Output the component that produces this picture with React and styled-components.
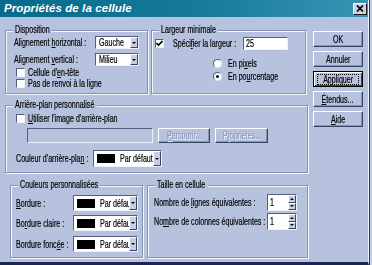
import React from 'react';
import styled, { createGlobalStyle, css } from 'styled-components';

const BG = '#b7c3de';
const DARK = '#3a4466';
const SHADE = '#8692b2';
const LIGHT = '#f4f7fc';
const FONT = '"Liberation Sans", Arial, sans-serif';

const Global = createGlobalStyle`
  html, body { margin: 0; padding: 0; background: #c6d0ea; }
  body { font-family: ${FONT}; font-size: 10px; line-height: 11px; color: #000; }
  * { box-sizing: border-box; }
`;

/* Text of the screenshot is horizontally condensed: scale glyphs only */
const Txt = styled.span`
  display: inline-block;
  white-space: nowrap;
  transform: scaleX(0.71);
  transform-origin: ${p => p.$origin || 'left'} center;
  -webkit-text-stroke: 0.2px currentColor;
`;

const Screen = styled.div`
  width: 372px;
  height: 265px;
  overflow: hidden;
  display: flex;
  background: #c6d0ea;
`;

const Window = styled.div`
  width: 369px;
  height: 265px;
  flex: none;
  background: ${BG};
  border-right: 1px solid #eef2fa;
  border-bottom: 3px solid #1b2654;
  box-shadow: 1px 0 0 #23338a;
  display: flex;
  flex-direction: column;
`;

const TitleBar = styled.div`
  height: 17px;
  flex: none;
  background: linear-gradient(to right, #066a8a 0%, #167b9b 55%, #3a94b4 100%);
  display: flex;
  align-items: center;
  justify-content: space-between;
  padding: 0 1px 0 4px;
`;

const Title = styled.span`
  font-family: "Liberation Sans", Arial, sans-serif;
  font-weight: bold;
  font-style: oblique 12deg;
  font-synthesis: style weight;
  font-size: 11.5px;
  letter-spacing: 0.1px;
  color: #fff;
`;

const CloseButton = styled.span`
  width: 14px;
  height: 12px;
  background: #c9d1e3;
  display: flex;
  align-items: center;
  justify-content: center;
  border: 1px solid;
  border-color: #fff #1a1a1a #1a1a1a #fff;
`;

const Body = styled.div`
  flex: 1;
  display: flex;
  padding: 8px 0 0 5px;
`;

const Main = styled.div`
  width: 303px;
  flex: none;
  display: flex;
  flex-direction: column;
`;

const Side = styled.div`
  width: 50px;
  margin-left: 5px;
  padding-top: 6px;
  display: flex;
  flex-direction: column;
  gap: 4px;
`;

const GroupRow = styled.div`
  display: flex;
  gap: ${p => p.$gap || 0}px;
  margin-top: ${p => p.$mt || 0}px;
  padding-left: ${p => p.$pl || 0}px;
`;

const Group = styled.fieldset`
  margin: 0 0 0 ${p => p.$ml || 0}px;
  padding: 0;
  min-width: 0;
  width: ${p => p.$w}px;
  height: ${p => p.$h}px;
  border: 1px solid ${SHADE};
  box-shadow: 1px 1px 0 ${LIGHT}, inset 1px 1px 0 ${LIGHT};
`;

const Legend = styled.legend`
  width: ${p => p.$w}px;
  margin-left: 7px;
  padding: 0 2px;
  line-height: 10px;
  background: ${BG};
  white-space: nowrap;
`;

const Content = styled.div`
  padding: ${p => p.$pad};
  display: flex;
  flex-direction: column;
`;

const FieldRow = styled.div`
  display: flex;
  align-items: center;
  height: ${p => p.$h}px;
  margin-top: ${p => p.$mt || 0}px;
  margin-left: ${p => p.$ml || 0}px;
  gap: ${p => p.$gap || 0}px;
  white-space: nowrap;
`;

const FieldLabel = styled.span`
  width: ${p => p.$w}px;
  flex: none;
  padding-left: ${p => p.$pl || 0}px;
  white-space: nowrap;
`;

const sunken = css`
  border: 1px solid;
  border-color: #56607e #eef2fa #eef2fa #56607e;
`;

const Combo = styled.div`
  ${sunken};
  width: ${p => p.$w}px;
  height: ${p => p.$h}px;
  flex: none;
  background: #fff;
  display: flex;
  align-items: stretch;
  overflow: hidden;
`;

const ComboText = styled.span`
  flex: 1;
  min-width: 0;
  overflow: hidden;
  white-space: nowrap;
  padding-left: ${p => (p.$pl === undefined ? 3 : p.$pl)}px;
  display: flex;
  align-items: center;
`;

const Swatch = styled.span`
  width: 18px;
  height: 9px;
  flex: none;
  background: #000;
  margin: 0 5px 0 3px;
`;

const ComboArrow = styled.span`
  width: 8px;
  flex: none;
  background: #c8cfe2;
  border: 1px solid;
  border-color: #fff ${DARK} ${DARK} #fff;
  display: flex;
  align-items: center;
  justify-content: center;
  &::after {
    content: '';
    border-left: 2px solid transparent;
    border-right: 2px solid transparent;
    border-top: 2px solid #000;
  }
`;

const TextField = styled.div`
  ${sunken};
  width: ${p => p.$w}px;
  height: ${p => p.$h}px;
  flex: none;
  margin-left: ${p => p.$ml || 0}px;
  background: ${p => (p.$disabled ? BG : '#fff')};
  display: flex;
  align-items: center;
  padding-left: 2px;
`;

const SpinButtons = styled.span`
  width: 8px;
  margin-left: auto;
  align-self: stretch;
  display: flex;
  flex-direction: column;
`;

const SpinHalf = styled.span`
  flex: 1;
  background: #c8cfe2;
  border: 1px solid;
  border-color: #fff ${DARK} ${DARK} #fff;
  display: flex;
  align-items: center;
  justify-content: center;
  &::after {
    content: '';
    border-left: 2px solid transparent;
    border-right: 2px solid transparent;
    ${p => (p.$up ? 'border-bottom: 2px solid #000;' : 'border-top: 2px solid #000;')}
  }
`;

const CheckBox = styled.span`
  ${sunken};
  width: 9px;
  height: 9px;
  flex: none;
  background: #fff;
  display: flex;
  align-items: center;
  justify-content: center;
`;

const Radio = styled.span`
  width: 9px;
  height: 9px;
  flex: none;
  border-radius: 50%;
  background: #fff;
  border: 1px solid;
  border-color: #56607e #dfe5f2 #dfe5f2 #56607e;
  display: flex;
  align-items: center;
  justify-content: center;
  &::after {
    content: '';
    width: 3px;
    height: 3px;
    border-radius: 50%;
    background: ${p => (p.$on ? '#000' : 'transparent')};
  }
`;

const Button = styled.button`
  width: ${p => p.$w || 50}px;
  height: ${p => p.$h || 16}px;
  flex: none;
  margin: 0 0 0 ${p => p.$ml || 0}px;
  padding: 0;
  font: inherit;
  color: ${p => (p.disabled ? '#8e99b6' : '#000')};
  text-shadow: ${p => (p.disabled ? `1px 1px 0 ${LIGHT}` : 'none')};
  background: ${BG};
  border: 1px solid;
  border-color: #fff ${DARK} ${DARK} #fff;
  box-shadow: inset -1px -1px 0 ${SHADE};
  display: flex;
  align-items: center;
  justify-content: center;
  ${p =>
    p.$focused &&
    css`
      border-color: #000;
      box-shadow: inset 1px 1px 0 #fff, inset -1px -1px 0 ${DARK};
    `}
`;

const FocusRing = styled.span`
  width: 42px;
  height: 11px;
  border: 1px dotted #000;
  display: flex;
  align-items: center;
  justify-content: center;
`;

const Check = ({ on }) => (
  <CheckBox>
    {on && (
      <svg width="7" height="7" viewBox="0 0 7 7">
        <path d="M0.5 3 L2.5 5 L6.5 1" stroke="#000" strokeWidth="1.6" fill="none" />
      </svg>
    )}
  </CheckBox>
);

const ColorCombo = ({ w, h }) => (
  <Combo $w={w} $h={h}>
    <ComboText $pl={0}>
      <Swatch />
      <Txt>Par défaut</Txt>
    </ComboText>
    <ComboArrow />
  </Combo>
);

const Spin = () => (
  <TextField $w={30} $h={17}>
    <Txt>1</Txt>
    <SpinButtons>
      <SpinHalf $up />
      <SpinHalf />
    </SpinButtons>
  </TextField>
);

export default function App() {
  return (
    <>
      <Global />
      <Screen>
        <Window>
          <TitleBar>
            <Title>Propriétés de la cellule</Title>
            <CloseButton>
              <svg width="8" height="7" viewBox="0 0 8 7">
                <path d="M1 0.5 L7 6.5 M7 0.5 L1 6.5" stroke="#000" strokeWidth="1.7" />
              </svg>
            </CloseButton>
          </TitleBar>
          <Body>
            <Main>
              <GroupRow $gap={3}>
                <Group $w={143} $h={69}>
                  <Legend $w={39}><Txt>Disposition</Txt></Legend>
                  <Content $pad="1px 0 0 8px">
                    <FieldRow $h={13}>
                      <FieldLabel $w={81}>
                        <Txt>Alignement <u>h</u>orizontal :</Txt>
                      </FieldLabel>
                      <Combo $w={44} $h={13}>
                        <ComboText><Txt>Gauche</Txt></ComboText>
                        <ComboArrow />
                      </Combo>
                    </FieldRow>
                    <FieldRow $h={13} $mt={4}>
                      <FieldLabel $w={81}>
                        <Txt>Alignement <u>v</u>ertical :</Txt>
                      </FieldLabel>
                      <Combo $w={44} $h={13}>
                        <ComboText><Txt>Milieu</Txt></ComboText>
                        <ComboArrow />
                      </Combo>
                    </FieldRow>
                    <FieldRow $h={11} $mt={1} $ml={2} $gap={3}>
                      <Check />
                      <Txt>Cellule d'<u>e</u>n-tête</Txt>
                    </FieldRow>
                    <FieldRow $h={11} $ml={2} $gap={3}>
                      <Check />
                      <Txt>Pas de renvoi à la ligne</Txt>
                    </FieldRow>
                  </Content>
                </Group>
                <Group $w={155} $h={69}>
                  <Legend $w={59}><Txt>Largeur minimale</Txt></Legend>
                  <Content $pad="2px 0 0 3px">
                    <FieldRow $h={13}>
                      <Check on />
                      <FieldLabel $w={79} $pl={9}>
                        <Txt>Spéci<u>f</u>ier la largeur :</Txt>
                      </FieldLabel>
                      <TextField $w={45} $h={13}>
                        <Txt>25</Txt>
                      </TextField>
                    </FieldRow>
                    <FieldRow $h={13} $mt={7} $ml={58} $gap={6}>
                      <Radio />
                      <Txt>En pi<u>x</u>els</Txt>
                    </FieldRow>
                    <FieldRow $h={13} $ml={58} $gap={6}>
                      <Radio $on />
                      <Txt>En po<u>u</u>rcentage</Txt>
                    </FieldRow>
                  </Content>
                </Group>
              </GroupRow>

              <GroupRow $mt={6}>
                <Group $w={303} $h={73}>
                  <Legend $w={84}><Txt>Arrière-plan personnalisé</Txt></Legend>
                  <Content $pad="2px 0 0 10px">
                    <FieldRow $h={12} $gap={3}>
                      <Check />
                      <Txt><u>U</u>tiliser l'image d'arrière-plan</Txt>
                    </FieldRow>
                    <FieldRow $h={15} $mt={4}>
                      <TextField $w={126} $h={15} $ml={11} $disabled />
                      <Button $w={52} $h={15} $ml={5} disabled>
                        <Txt $origin="center"><u>P</u>arcourir...</Txt>
                      </Button>
                      <Button $w={53} $h={15} $ml={5} disabled>
                        <Txt $origin="center">P<u>r</u>opriétés...</Txt>
                      </Button>
                    </FieldRow>
                    <FieldRow $h={17} $mt={7}>
                      <FieldLabel $w={77}>
                        <Txt>Couleur d'arrière-pla<u>n</u> :</Txt>
                      </FieldLabel>
                      <ColorCombo w={69} h={17} />
                    </FieldRow>
                  </Content>
                </Group>
              </GroupRow>

              <GroupRow $mt={7} $pl={5}>
                <Group $w={133} $h={78}>
                  <Legend $w={82}><Txt>Couleurs personnalisées</Txt></Legend>
                  <Content $pad="5px 0 0 5px">
                    <FieldRow $h={16}>
                      <FieldLabel $w={57}>
                        <Txt><u>B</u>ordure :</Txt>
                      </FieldLabel>
                      <ColorCombo w={65} h={16} />
                    </FieldRow>
                    <FieldRow $h={16} $mt={4}>
                      <FieldLabel $w={57}>
                        <Txt>Bo<u>r</u>dure claire :</Txt>
                      </FieldLabel>
                      <ColorCombo w={65} h={16} />
                    </FieldRow>
                    <FieldRow $h={16} $mt={5}>
                      <FieldLabel $w={57}>
                        <Txt>Bordure fonc<u>é</u>e :</Txt>
                      </FieldLabel>
                      <ColorCombo w={65} h={16} />
                    </FieldRow>
                  </Content>
                </Group>
                <Group $w={161} $h={78} $ml={4}>
                  <Legend $w={53}><Txt>Taille en cellule</Txt></Legend>
                  <Content $pad="4px 0 0 6px">
                    <FieldRow $h={17}>
                      <FieldLabel $w={113}>
                        <Txt>Nombre de <u>l</u>ignes équivalentes :</Txt>
                      </FieldLabel>
                      <Spin />
                    </FieldRow>
                    <FieldRow $h={17} $mt={2}>
                      <FieldLabel $w={113}>
                        <Txt>No<u>m</u>bre de colonnes équivalentes :</Txt>
                      </FieldLabel>
                      <Spin />
                    </FieldRow>
                  </Content>
                </Group>
              </GroupRow>
            </Main>

            <Side>
              <Button><Txt $origin="center">OK</Txt></Button>
              <Button><Txt $origin="center">Annuler</Txt></Button>
              <Button $focused>
                <FocusRing>
                  <Txt $origin="center">A<u>p</u>pliquer</Txt>
                </FocusRing>
              </Button>
              <Button><Txt $origin="center"><u>É</u>tendus...</Txt></Button>
              <Button><Txt $origin="center"><u>A</u>ide</Txt></Button>
            </Side>
          </Body>
        </Window>
      </Screen>
    </>
  );
}
